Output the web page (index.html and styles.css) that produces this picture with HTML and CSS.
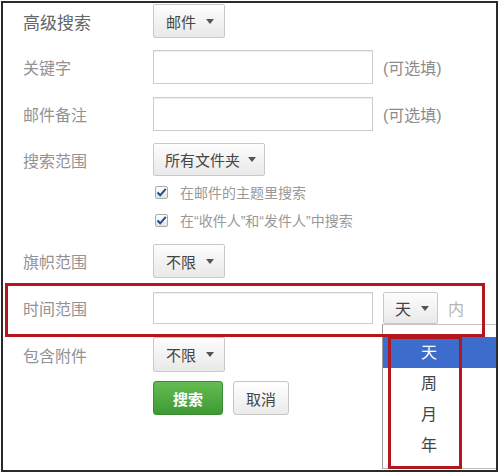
FILE: index.html
```html
<!DOCTYPE html>
<html lang="zh-CN">
	<head>
		<meta charset="utf-8">
		<link rel="stylesheet" href="styles.css">
	</head>
	<body>

		<div class="frame">

			<div class="row">
				<div class="label title">高级搜索</div>
				<button class="select">邮件<span class="caret"></span></button>
			</div>

			<div class="row gap12">
				<div class="label">关键字</div>
				<input class="text-input" type="text">
				<span class="hint">(可选填)</span>
			</div>

			<div class="row gap13">
				<div class="label">邮件备注</div>
				<input class="text-input" type="text">
				<span class="hint">(可选填)</span>
			</div>

			<div class="row gap12 short">
				<div class="label">搜索范围</div>
				<button class="select narrow">所有文件夹<span class="caret"></span></button>
			</div>

			<div class="check-row first">
				<span class="checkbox">
					<svg width="13" height="13" viewBox="0 0 13 13"><path d="M2.5 6.5 L5.2 9.3 L10.8 2.8" fill="none" stroke="#1d4e8c" stroke-width="2"/></svg>
				</span>
				<span>在邮件的主题里搜索</span>
			</div>

			<div class="check-row">
				<span class="checkbox">
					<svg width="13" height="13" viewBox="0 0 13 13"><path d="M2.5 6.5 L5.2 9.3 L10.8 2.8" fill="none" stroke="#1d4e8c" stroke-width="2"/></svg>
				</span>
				<span>在“收件人”和“发件人”中搜索</span>
			</div>

			<div class="row gap13">
				<div class="label">旗帜范围</div>
				<button class="select">不限<span class="caret"></span></button>
			</div>

			<div class="row time-row">
				<div class="label">时间范围</div>
				<input class="text-input small" type="text">
				<div class="unit-wrap">
					<button class="select unit">天<span class="caret"></span></button>
					<ul class="unit-list">
						<li class="active">天</li>
						<li>周</li>
						<li>月</li>
						<li>年</li>
					</ul>
				</div>
				<span class="inside">内</span>
			</div>

			<div class="row attach-row">
				<div class="label">包含附件</div>
				<button class="select">不限<span class="caret"></span></button>
			</div>

			<div class="row gap9">
				<div class="label"></div>
				<button class="btn-search">搜索</button>
				<button class="btn-cancel">取消</button>
			</div>

		</div>

	</body>
</html>
```

FILE: styles.css
```css
body {
	margin: 0;
	background: #fff;
	font-family: "Liberation Sans", "Noto Sans CJK SC", sans-serif;
}

.frame {
	position: relative;
	overflow: hidden;
	width: 473px;
	height: 466px;
	margin: 1px 0 0 1px;
	padding: 1px 0 0 20px;
	border: 2px solid #2a2a2a;
}

.row {
	display: flex;
	align-items: center;
	height: 34px;
}
.row.short {
	height: 33px;
}
.gap9 { margin-top: 9px; }
.gap12 { margin-top: 12px; }
.gap13 { margin-top: 13px; }

.label {
	width: 130px;
	flex: none;
	font-size: 16px;
	color: #929292;
}
.label.title {
	font-size: 17px;
	color: #666;
}

.select {
	display: flex;
	align-items: center;
	height: 100%;
	padding: 0 10px 0 12px;
	border: 1px solid #c9c9c9;
	border-radius: 2px;
	background: linear-gradient(#fdfdfd, #e9e9e9);
	font-family: inherit;
	font-size: 15px;
	color: #444;
	box-sizing: border-box;
}
.select.narrow {
	padding: 0 8px 0 11px;
}
.caret {
	width: 0;
	height: 0;
	margin-left: 10px;
	border-left: 4px solid transparent;
	border-right: 4px solid transparent;
	border-top: 5px solid #555;
}
.narrow .caret {
	margin-left: 8px;
}

.text-input {
	width: 220px;
	height: 100%;
	margin: 0;
	padding: 0;
	border: 1px solid #cdcdcd;
	box-shadow: inset 0 1px 1px #eee;
	box-sizing: border-box;
}
.text-input.small {
	height: 32px;
}
.hint {
	margin-left: 10px;
	font-size: 16px;
	color: #8c8c8c;
}

.check-row {
	display: flex;
	align-items: center;
	height: 22px;
	margin-top: 6px;
	padding-left: 130px;
	font-size: 14px;
	color: #999;
}
.check-row.first {
	margin-top: 5px;
}
.checkbox {
	display: flex;
	width: 13px;
	height: 13px;
	margin: 0 12px 0 2px;
	border: 1px solid #aaa;
	border-radius: 2px;
	background: linear-gradient(#fff, #e4e4e4);
	box-sizing: border-box;
}
.checkbox svg {
	margin: -1px;
}

/* time row, highlighted */
.time-row {
	position: relative;
	height: 54px;
	width: 480px;
	margin: 5px 0 0 -18px;
	padding: 0 0 4px 18px;
	box-sizing: border-box;
}
.time-row::after {
	content: "";
	position: absolute;
	left: 0;
	top: 0;
	right: 0;
	bottom: 0;
	border: 3px solid #b3161c;
	z-index: 2;
}
.unit-wrap {
	position: relative;
	height: 32px;
	margin-left: 10px;
}
.select.unit {
	width: 55px;
	padding-left: 11px;
	font-size: 16px;
}
.inside {
	margin-left: 10px;
	font-size: 16px;
	color: #b5b5b5;
}

.unit-list {
	position: absolute;
	left: -1px;
	top: 32px;
	z-index: 1;
	width: 130px;
	margin: 0;
	padding: 12px 0 7px 0;
	list-style: none;
	background: #fff;
	border-left: 1px solid #9c9c9c;
	border-top: 1px solid #c4c4c4;
	border-bottom: 1px solid #bbb;
}
.unit-list li {
	height: 31px;
	line-height: 31px;
	padding-left: 38px;
	font-size: 16px;
	color: #444;
}
.unit-list li.active {
	background: #3c6dcd;
	color: #fff;
}
.unit-list::after {
	content: "";
	position: absolute;
	left: 5px;
	top: 11px;
	width: 74px;
	height: 133px;
	border: 3px solid #b3161c;
	box-sizing: border-box;
}

.attach-row {
	height: 35px;
}

.btn-search {
	width: 70px;
	height: 100%;
	border: 1px solid #3a8b31;
	border-radius: 3px;
	background: linear-gradient(#63bd52, #3f9a36);
	color: #fff;
	font-family: inherit;
	font-size: 15px;
	font-weight: bold;
}
.btn-cancel {
	width: 56px;
	height: 100%;
	margin-left: 10px;
	border: 1px solid #c6c6c6;
	border-radius: 3px;
	background: linear-gradient(#fff, #ebebeb);
	color: #444;
	font-family: inherit;
	font-size: 15px;
}
```
